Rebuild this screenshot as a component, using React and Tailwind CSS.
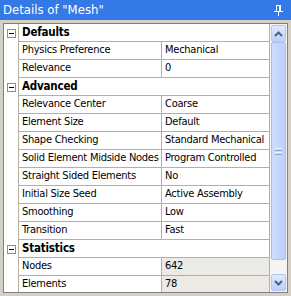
import React from "react";

const font = "font-['Tahoma','DejaVu_Sans_Condensed','DejaVu_Sans',sans-serif]";

const groups = [
  {
    title: "Defaults",
    rows: [
      ["Physics Preference", "Mechanical"],
      ["Relevance", "0"],
    ],
  },
  {
    title: "Advanced",
    rows: [
      ["Relevance Center", "Coarse"],
      ["Element Size", "Default"],
      ["Shape Checking", "Standard Mechanical"],
      ["Solid Element Midside Nodes", "Program Controlled"],
      ["Straight Sided Elements", "No"],
      ["Initial Size Seed", "Active Assembly"],
      ["Smoothing", "Low"],
      ["Transition", "Fast"],
    ],
  },
  {
    title: "Statistics",
    readOnly: true,
    rows: [
      ["Nodes", "642"],
      ["Elements", "78"],
    ],
  },
];

function PinIcon() {
  return (
    <svg width="9" height="11" viewBox="0 0 9 11" shapeRendering="crispEdges">
      <rect x="2" y="0" width="5" height="1" fill="#fff" />
      <rect x="2" y="0" width="1" height="6" fill="#fff" />
      <rect x="5" y="0" width="2" height="6" fill="#fff" />
      <rect x="0" y="6" width="9" height="1" fill="#fff" />
      <rect x="4" y="7" width="1" height="4" fill="#fff" />
    </svg>
  );
}

function Chevron({ down }) {
  return (
    <svg width="9" height="6" viewBox="0 0 9 6">
      <path
        d={down ? "M1 1 L4.5 4.5 L8 1" : "M1 5 L4.5 1.5 L8 5"}
        stroke="#4d6185"
        strokeWidth="2"
        fill="none"
      />
    </svg>
  );
}

function Minus() {
  return (
    <div className="w-[9px] h-[9px] border border-[#8f8f8f] bg-white flex items-center justify-center">
      <div className="w-[5px] h-[1px] bg-black" />
    </div>
  );
}

function GroupRow({ title }) {
  return (
    <div className="flex h-[18px] shrink-0">
      <div className="w-[15px] border-r border-[#b3b0a2] flex items-center justify-center">
        <Minus />
      </div>
      <div className="flex-1 border-b border-[#b3b0a2] flex items-center pl-[3px] font-bold text-[11.5px] tracking-[-0.2px] text-black">
        {title}
      </div>
    </div>
  );
}

function DataRow({ name, value, readOnly }) {
  return (
    <div className="flex h-[18px] shrink-0 tracking-[-0.25px]">
      <div className="w-[15px] border-r border-[#b3b0a2]" />
      <div className="w-[143px] border-r border-b border-[#b3b0a2] flex items-center pl-[3px] overflow-hidden whitespace-nowrap">
        {name}
      </div>
      <div
        className={`flex-1 border-b border-[#b3b0a2] flex items-center pl-[3px] overflow-hidden whitespace-nowrap ${
          readOnly ? "bg-[#ebeae5]" : "bg-white"
        }`}
      >
        {value}
      </div>
    </div>
  );
}

function Scrollbar() {
  return (
    <div className="w-[17px] flex flex-col bg-[#f5f4f0] shrink-0">
      <div className="h-[17px] mx-[1px] mt-[1px] rounded-[2px] border border-[#b3c6ef] bg-gradient-to-b from-[#e0eafe] to-[#bcd0fa] flex items-center justify-center">
        <Chevron />
      </div>
      <div className="h-[218px] mx-[1px] rounded-[2px] border border-[#a9bff0] bg-gradient-to-r from-[#cfdcfd] to-[#bcd0fb] flex items-center justify-center">
        <div className="flex flex-col gap-[1px]">
          <div className="w-[7px] h-[1px] bg-[#eef3fe]" />
          <div className="w-[7px] h-[1px] bg-[#8ca6e0]" />
          <div className="w-[7px] h-[1px] bg-[#eef3fe]" />
          <div className="w-[7px] h-[1px] bg-[#8ca6e0]" />
        </div>
      </div>
      <div className="flex-1" />
      <div className="h-[17px] mx-[1px] mb-[1px] rounded-[2px] border border-[#b3c6ef] bg-gradient-to-b from-[#e0eafe] to-[#bcd0fa] flex items-center justify-center">
        <Chevron down />
      </div>
    </div>
  );
}

export default function App() {
  return (
    <div className={`w-[291px] h-[296px] bg-[#d4d0c8] flex flex-col overflow-hidden text-[11px] text-black ${font}`}>
      <div className="h-[20px] shrink-0 bg-[#3479e6] flex items-center justify-between pl-[3px] pr-[8px] text-white text-[13px]">
        <span>Details of "Mesh"</span>
        <PinIcon />
      </div>
      <div className="flex-1 p-[3px] min-h-0">
        <div className="h-full border border-[#808080] bg-white flex overflow-hidden">
          <div className="flex-1 flex flex-col overflow-hidden border-r border-[#b3b0a2]">
            {groups.map((g) => (
              <React.Fragment key={g.title}>
                <GroupRow title={g.title} />
                {g.rows.map(([n, v]) => (
                  <DataRow key={n} name={n} value={v} readOnly={g.readOnly} />
                ))}
              </React.Fragment>
            ))}
          </div>
          <Scrollbar />
        </div>
      </div>
    </div>
  );
}
